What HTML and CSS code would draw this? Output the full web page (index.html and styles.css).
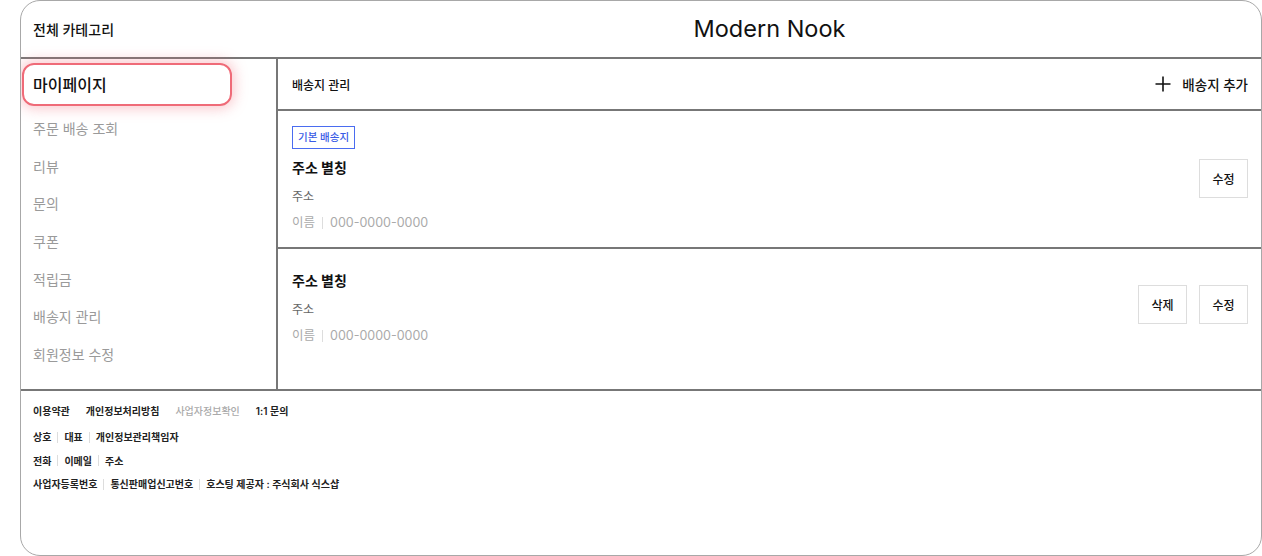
FILE: index.html
```html
<!DOCTYPE html>
<html lang="ko">
<head>
    <meta charset="UTF-8">
    <title>Modern Nook - 배송지 관리</title>
    <link rel="stylesheet" href="styles.css">
</head>
<body>
    <div class="frame">
        <header class="top">
            <div class="cat">전체 카테고리</div>
            <div class="logo">Modern Nook</div>
        </header>

        <div class="main">
            <!-- 사이드 메뉴 -->
            <nav class="side">
                <div class="side-title">마이페이지</div>
                <ul class="menu">
                    <li>주문 배송 조회</li>
                    <li>리뷰</li>
                    <li>문의</li>
                    <li>쿠폰</li>
                    <li>적립금</li>
                    <li>배송지 관리</li>
                    <li>회원정보 수정</li>
                </ul>
            </nav>

            <section class="content">
                <div class="content-head">
                    <span class="head-title">배송지 관리</span>
                    <a class="add" href="#">
                        <svg width="16" height="16" viewBox="0 0 16 16"><path d="M8 0.5v15M0.5 8h15" stroke="#111" stroke-width="1.6" fill="none"/></svg>
                        배송지 추가
                    </a>
                </div>

                <div class="card">
                    <div class="info">
                        <span class="badge">기본 배송지</span>
                        <div class="alias">주소 별칭</div>
                        <div class="addr">주소</div>
                        <div class="who">이름<i class="bar"></i>000-0000-0000</div>
                    </div>
                    <div class="btns">
                        <button class="btn">수정</button>
                    </div>
                </div>

                <div class="card card-last">
                    <div class="info">
                        <div class="alias">주소 별칭</div>
                        <div class="addr">주소</div>
                        <div class="who">이름<i class="bar"></i>000-0000-0000</div>
                    </div>
                    <div class="btns">
                        <button class="btn">삭제</button>
                        <button class="btn">수정</button>
                    </div>
                </div>
            </section>
        </div>

        <footer class="foot">
            <div class="links">
                <a href="#">이용약관</a>
                <a href="#">개인정보처리방침</a>
                <a href="#" class="dim">사업자정보확인</a>
                <a href="#">1:1 문의</a>
            </div>
            <div class="row">상호<i class="bar"></i>대표<i class="bar"></i>개인정보관리책임자</div>
            <div class="row">전화<i class="bar"></i>이메일<i class="bar"></i>주소</div>
            <div class="row">사업자등록번호<i class="bar"></i>통신판매업신고번호<i class="bar"></i>호스팅 제공자 : 주식회사 식스샵</div>
        </footer>
    </div>
</body>
</html>
```

FILE: styles.css
```css
*{
    box-sizing:border-box;
}
body{
    margin:0;
    background:#fff;
    color:#111;
    font-family:Inter, "Noto Sans CJK KR", sans-serif;
}
a{
    color:inherit;
    text-decoration:none;
}
ul{
    margin:0;
    padding:0;
    list-style:none;
}
.frame{
    margin-left:20px;
    width:1242px;
    height:556px;
    border:1px solid #a8a8a8;
    border-radius:20px;
    display:flex;
    flex-direction:column;
    overflow:hidden;
}
.top{
    height:58px;
    border-bottom:2px solid #777;
    display:grid;
    grid-template-columns:257px 1fr;
    align-items:center;
}
.cat{
    padding-left:12px;
    font-size:14px;
    font-weight:500;
    padding-bottom:1px;
}
.logo{
    text-align:center;
    font-size:23.5px;
    font-weight:400;
    padding-bottom:2px;
}
.main{
    display:flex;
    border-bottom:2px solid #777;
}
.side{
    width:257px;
    border-right:2px solid #777;
    padding:4px 0 0 1px;
}
.side-title{
    width:210px;
    height:43px;
    border:2px solid #ef6b78;
    border-radius:12px;
    box-shadow:0 0 14px 2px rgba(239, 107, 120, 0.4);
    display:flex;
    align-items:center;
    padding:0 0 1px 9px;
    font-size:16px;
    font-weight:500;
}
.menu{
    padding-top:3px;
}
.menu li{
    height:37.7px;
    display:flex;
    align-items:center;
    padding-left:11px;
    font-size:14px;
    color:#9a9a9a;
}
.content{
    flex:1;
    display:flex;
    flex-direction:column;
}
.content-head{
    height:52px;
    border-bottom:2px solid #777;
    display:flex;
    align-items:center;
    justify-content:space-between;
    padding:0 13px 0 14px;
}
.head-title{
    font-size:12px;
    font-weight:500;
}
.add{
    display:flex;
    align-items:center;
    gap:11px;
    font-size:13.5px;
    font-weight:500;
}
.card{
    display:flex;
    align-items:center;
    justify-content:space-between;
    padding:14px 13px 15px 14px;
    border-bottom:2px solid #777;
    height:138px;
}
.card-last{
    border-bottom:none;
    height:140px;
    align-items:flex-start;
    padding-top:22px;
}
.card-last .btns{
    margin-top:14px;
}
.badge{
    display:inline-block;
    height:23px;
    line-height:21px;
    padding:0 5px;
    border:1px solid #4a6cf0;
    color:#3a5ce6;
    font-size:10.5px;
    font-weight:500;
    margin-bottom:9px;
}
.alias{
    font-size:14px;
    font-weight:700;
    line-height:20px;
    margin-bottom:9px;
}
.addr{
    font-size:12px;
    color:#666;
    line-height:20px;
    margin-bottom:6px;
}
.who{
    font-size:12.5px;
    color:#aaa;
    line-height:20px;
    display:flex;
    align-items:center;
}
.bar{
    display:inline-block;
    width:1px;
    height:12px;
    background:#ddd;
    margin:0 7px;
}
.btns{
    display:flex;
    gap:12px;
}
.btn{
    width:49px;
    height:39px;
    background:#fff;
    border:1px solid #ddd;
    font-family:inherit;
    font-size:12px;
    font-weight:500;
    color:#111;
    padding:0;
}
.foot{
    flex:1;
    padding:13px 12px 0;
    font-size:10px;
    font-weight:600;
    color:#222;
}
.links{
    display:flex;
    gap:16px;
    line-height:14px;
    margin-bottom:12px;
}
.links .dim{
    color:#aaa;
    font-weight:500;
}
.row{
    display:flex;
    align-items:center;
    line-height:14px;
    margin-bottom:9.5px;
}
.foot .bar{
    height:11px;
    margin:0 6px;
}
```
